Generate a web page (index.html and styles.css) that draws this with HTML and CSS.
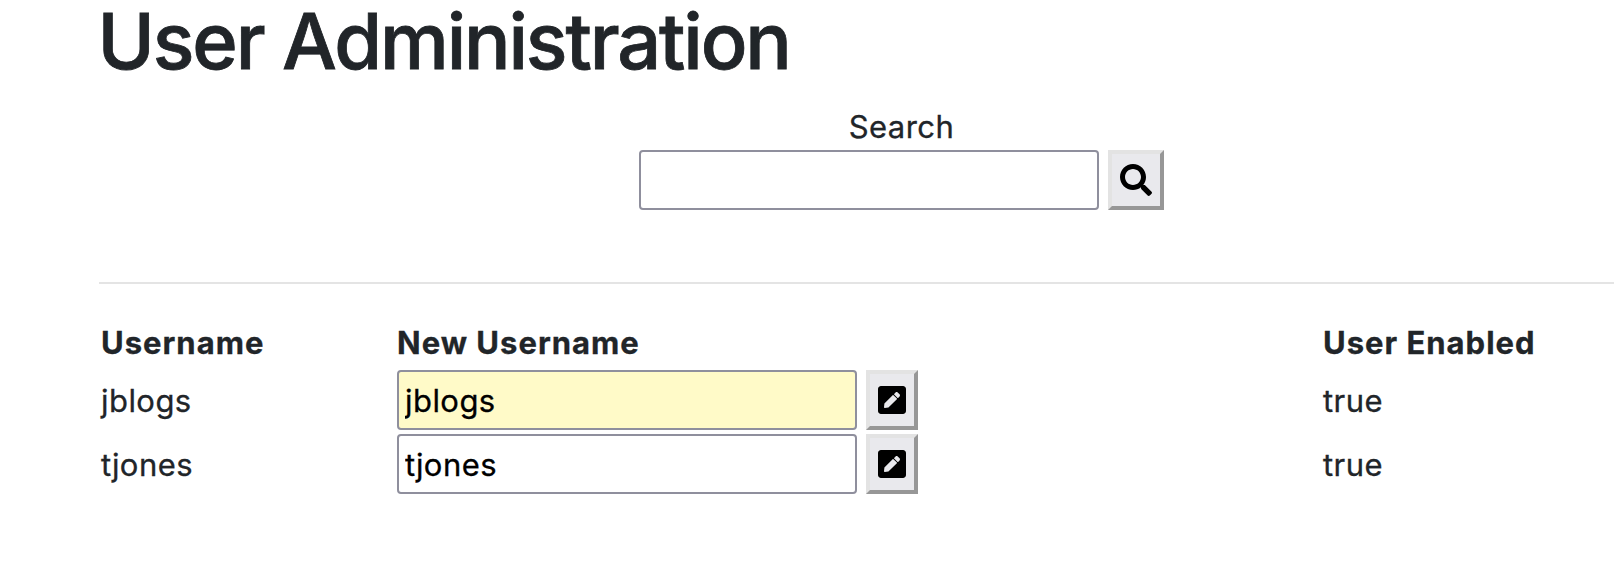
FILE: index.html
```html
<!DOCTYPE html>
<html lang="en">
<head>
<meta charset="utf-8">
<title>User Administration</title>
<link rel="stylesheet" href="styles.css">
</head>
<body>
<svg width="0" height="0" class="defs">
  <symbol id="pen-square" viewBox="0 0 448 512"><path d="M400 480H48c-26.5 0-48-21.5-48-48V80c0-26.5 21.5-48 48-48h352c26.5 0 48 21.5 48 48v352c0 26.5-21.5 48-48 48zM238.1 177.9L102.4 313.6l-6.3 57.1c-.8 7.6 5.6 14.1 13.3 13.3l57.1-6.3L302.2 242c2.3-2.3 2.3-6.1 0-8.500L246.7 178c-2.500-2.400-6.300-2.400-8.600-.1zM345 165.1L314.9 135c-9.400-9.400-24.600-9.400-33.900 0l-23.100 23.100c-2.300 2.300-2.300 6.100 0 8.500l55.500 55.500c2.300 2.300 6.100 2.300 8.500 0L345 199c9.300-9.300 9.300-24.500 0-33.900z"/></symbol>
</svg>
<main class="page">
  <h1 class="title">User Administration</h1>
  <form class="search">
    <label class="search-label" for="q">Search</label>
    <div class="search-row">
      <input class="field" id="q" type="text">
      <button class="btn btn-search" type="button" aria-label="Search"><svg class="icon-search" viewBox="0 0 512 512"><path d="M505 442.7L405.3 343c-4.500-4.500-10.600-7-17-7H372c27.600-35.300 44-79.700 44-128C416 93.100 322.900 0 208 0S0 93.100 0 208s93.100 208 208 208c48.300 0 92.700-16.400 128-44v16.300c0 6.400 2.500 12.500 7 17l99.700 99.700c9.400 9.400 24.600 9.400 33.900 0l28.300-28.300c9.400-9.400 9.400-24.600.1-34zM208 336c-70.700 0-128-57.200-128-128 0-70.700 57.200-128 128-128 70.700 0 128 57.200 128 128 0 70.700-57.200 128-128 128z"/></svg></button>
    </div>
  </form>
  <hr class="rule">
  <div class="users">
    <div class="row head"><span>Username</span><span>New Username</span><span>User Enabled</span></div>
    <div class="row">
      <span class="name">jblogs</span>
      <div class="edit"><input class="field filled" type="text" value="jblogs"><button class="btn btn-edit" type="button" aria-label="Edit"><svg class="icon-pen"><use href="#pen-square"/></svg></button></div>
      <span class="enabled">true</span>
    </div>
    <div class="row">
      <span class="name">tjones</span>
      <div class="edit"><input class="field" type="text" value="tjones"><button class="btn btn-edit" type="button" aria-label="Edit"><svg class="icon-pen"><use href="#pen-square"/></svg></button></div>
      <span class="enabled">true</span>
    </div>
  </div>
</main>
</body>
</html>
```
FILE: styles.css
```css
* { box-sizing: border-box; }
body {
  margin: 0;
  background: #fff;
  color: #212529;
  font: 400 31px/48px Inter, "Liberation Sans", sans-serif;
  letter-spacing: 0.45px;
  -webkit-text-stroke: 0.3px;
}
.defs { display: block; }
.page { padding-left: 99px; }
.title {
  margin: 0 0 0 -1.5px;
  height: 103px;
  line-height: 82px;
  font-size: 77.5px;
  font-weight: 500;
  letter-spacing: -2.15px;
  -webkit-text-stroke: 0.8px;
}
.search {
  display: flex;
  flex-direction: column;
  width: 525px;
  margin-left: 540px;
}
.search-label { height: 47px; text-align: center; }
.search-row, .edit { display: flex; gap: 9px; }
.field {
  width: 460px;
  height: 60px;
  margin: 0;
  padding: 0 6px;
  border: 2px solid #8f8f9d;
  border-radius: 4px;
  background: #fff;
  color: #000;
  font: inherit;
  letter-spacing: inherit;
  outline: 0;
}
.filled { background: #fffac8; }
.btn {
  display: flex;
  align-items: center;
  justify-content: center;
  height: 60px;
  padding: 0;
  border: 4px solid;
  border-color: #e3e3e3 #979797 #979797 #e3e3e3;
  background: #e9e9ed;
  color: #000;
}
.btn-search { width: 56px; }
.btn-edit { width: 52px; }
.icon-search { width: 32px; height: 32px; }
.icon-pen { width: 28px; height: 32px; }
.rule {
  height: 2px;
  margin: 72px 0 35px;
  border: 0;
  background: #e4e4e4;
}
.users { display: grid; gap: 4px; }
.row {
  display: grid;
  grid-template-columns: 298px 926px auto;
  height: 60px;
  line-height: 61px;
}
.head {
  grid-template-columns: 296px 926px auto;
  height: 47px;
  padding-left: 2px;
  line-height: 48px;
  font-weight: 700;
  letter-spacing: 1px;
}
.name { padding-left: 2px; }
```
